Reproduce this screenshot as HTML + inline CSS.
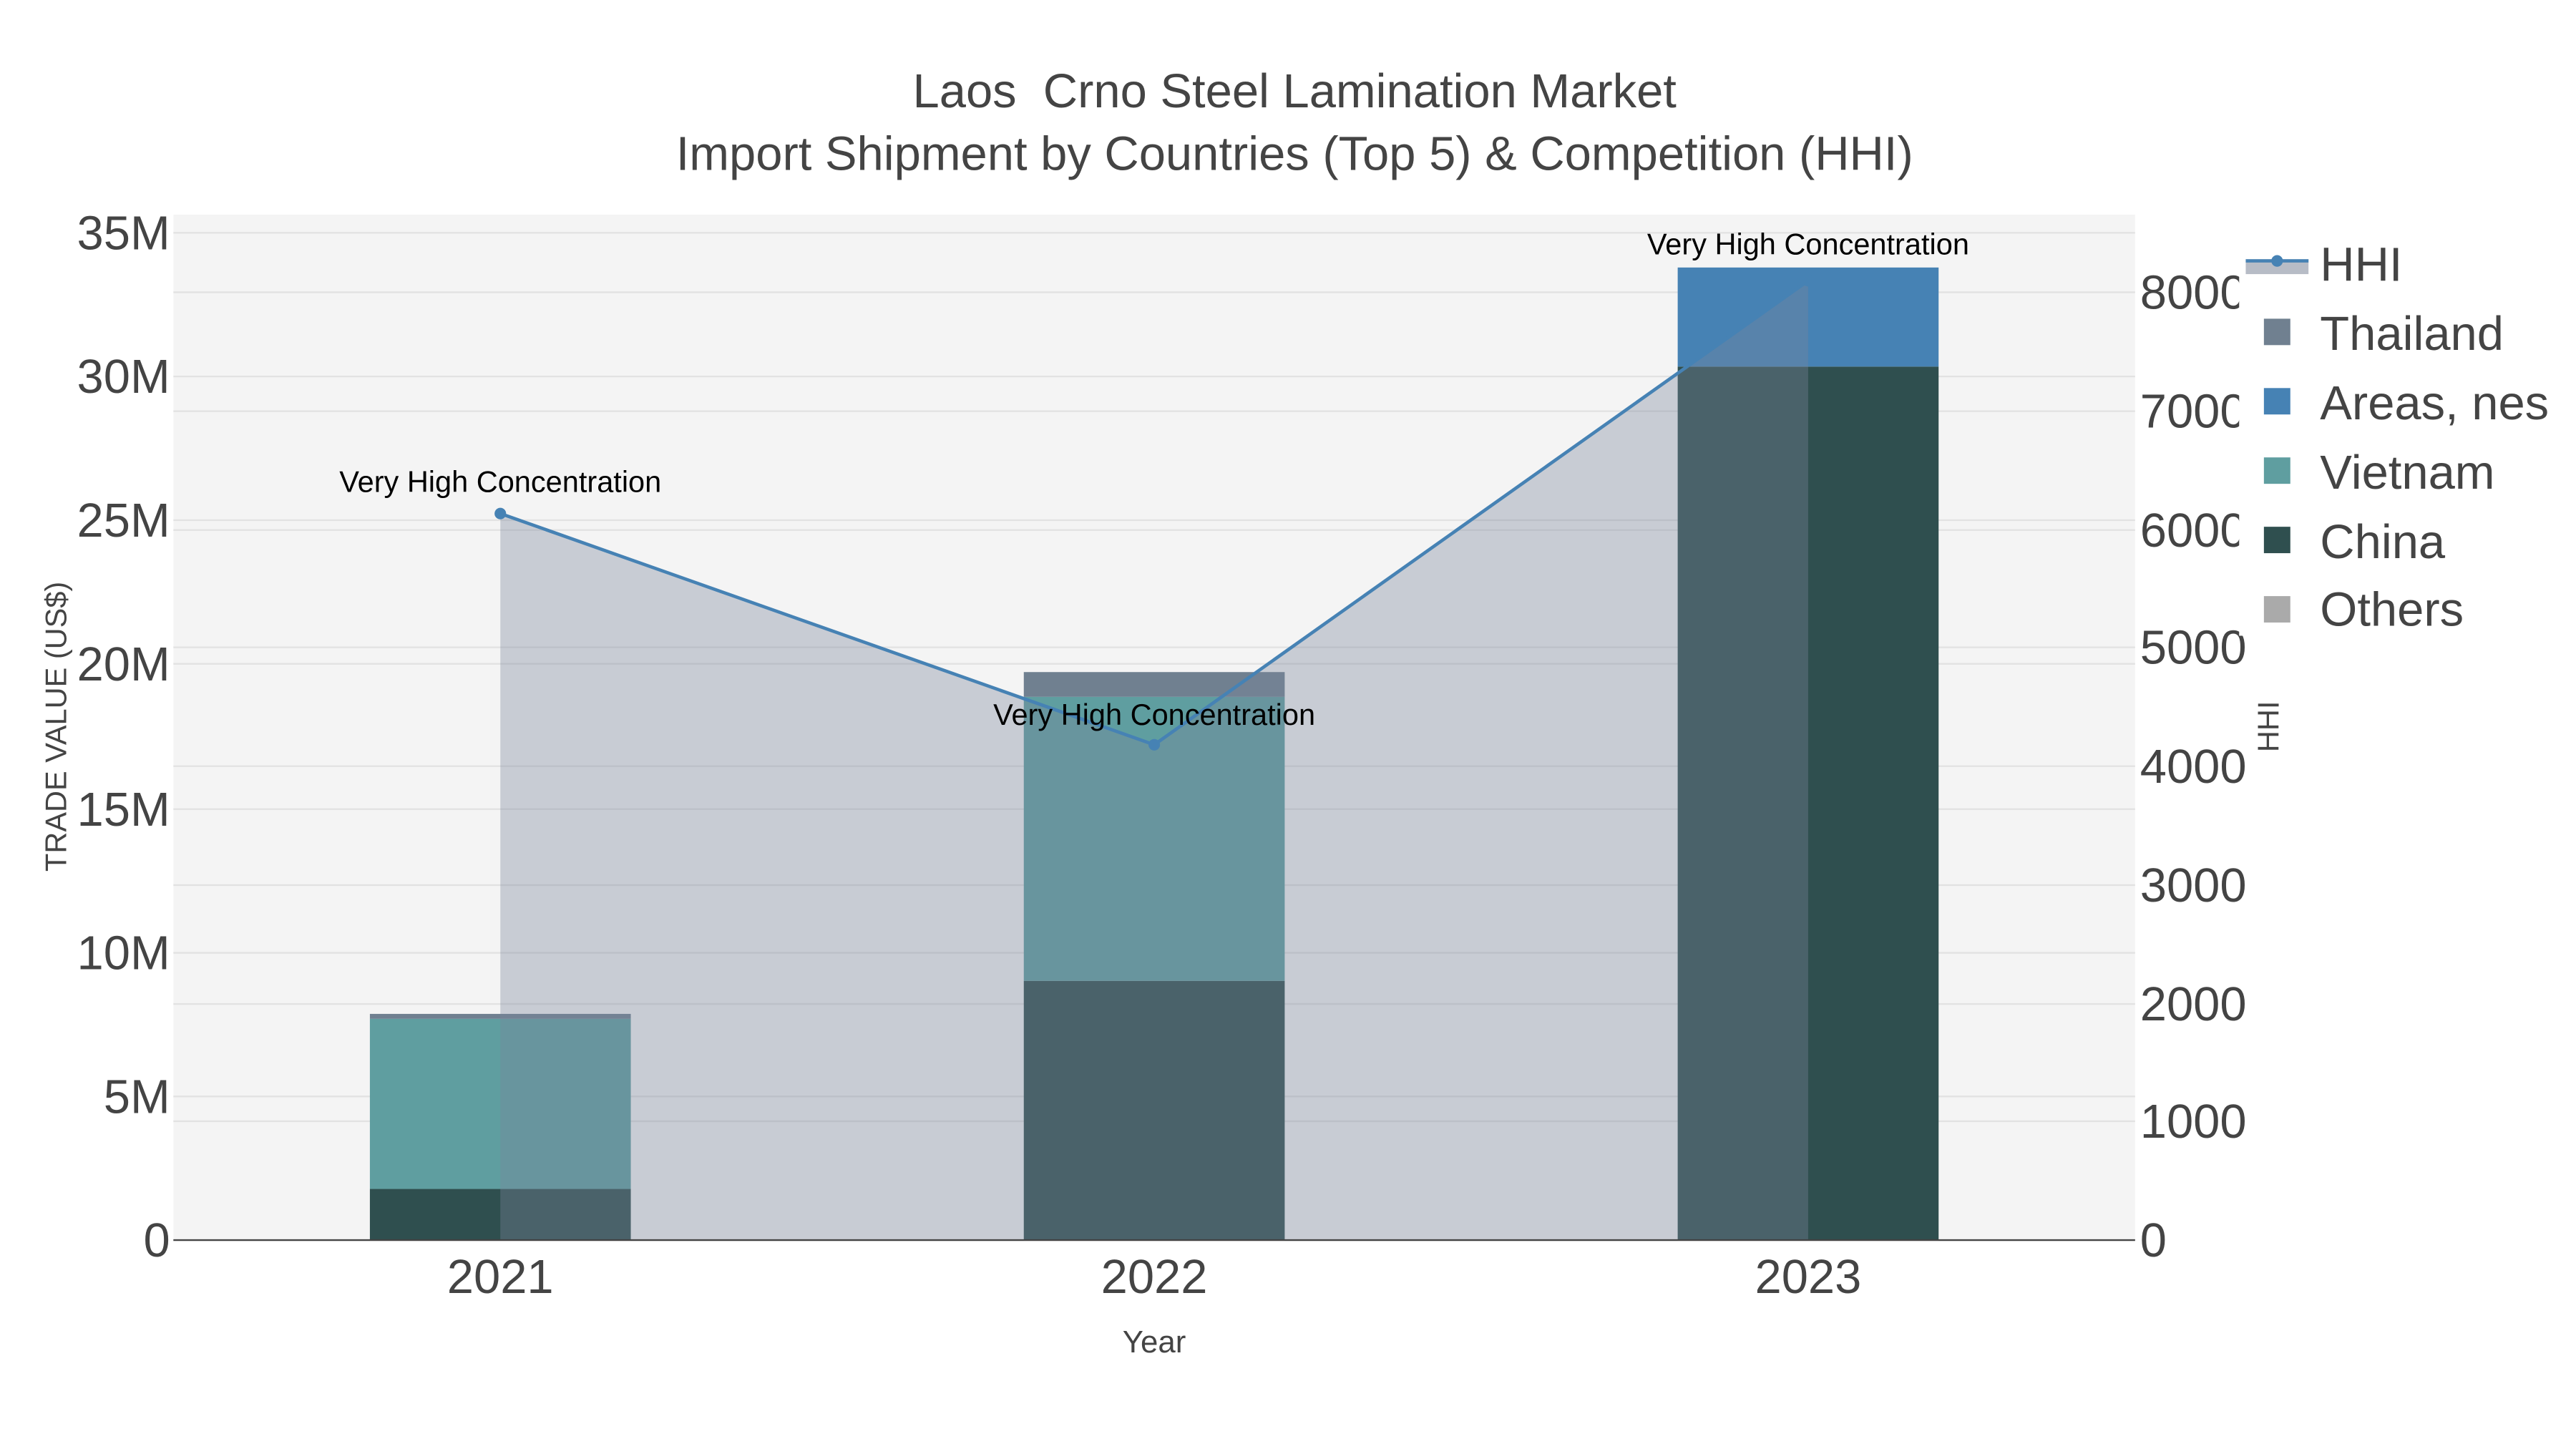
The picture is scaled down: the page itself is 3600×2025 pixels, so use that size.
<!DOCTYPE html>
<html><head><meta charset="utf-8"><style>
html,body{margin:0;padding:0;background:#fff;}
svg{display:block;font-family:"Liberation Sans",Arial,sans-serif;}
</style></head><body>
<svg width="3600" height="2025" viewBox="0 0 1560 877.5" xmlns="http://www.w3.org/2000/svg">
<rect width="1560" height="877.5" fill="#fff"/>
<rect x="105" y="130" width="1188" height="621" fill="#f4f4f4"/>
<g stroke="#e2e2e2" stroke-width="1">
<line x1="105" x2="1293" y1="664" y2="664"/><line x1="105" x2="1293" y1="577" y2="577"/>
<line x1="105" x2="1293" y1="490" y2="490"/><line x1="105" x2="1293" y1="402" y2="402"/>
<line x1="105" x2="1293" y1="315" y2="315"/><line x1="105" x2="1293" y1="228" y2="228"/>
<line x1="105" x2="1293" y1="141" y2="141"/>
<line x1="105" x2="1293" y1="679" y2="679"/><line x1="105" x2="1293" y1="608" y2="608"/>
<line x1="105" x2="1293" y1="536" y2="536"/><line x1="105" x2="1293" y1="464" y2="464"/>
<line x1="105" x2="1293" y1="392" y2="392"/><line x1="105" x2="1293" y1="321" y2="321"/>
<line x1="105" x2="1293" y1="249" y2="249"/><line x1="105" x2="1293" y1="177" y2="177"/>
</g>
<!-- bars -->
<rect x="224" y="720" width="158" height="31" fill="#2f4f4f"/>
<rect x="224" y="617" width="158" height="103" fill="#5f9ea0"/>
<rect x="224" y="614" width="158" height="3" fill="#708090"/>
<rect x="620" y="594" width="158" height="157" fill="#2f4f4f"/>
<rect x="620" y="422" width="158" height="172" fill="#5f9ea0"/>
<rect x="620" y="407" width="158" height="15" fill="#708090"/>
<rect x="1016" y="222" width="158" height="529" fill="#2f4f4f"/>
<rect x="1016" y="162" width="158" height="60" fill="#4682b4"/>
<!-- HHI area -->
<polygon points="303,751 303,311 699,451 1095,170 1095,751" fill="rgb(122,133,155)" fill-opacity="0.36"/>
<polyline points="303,311 699,451 1095,170" fill="none" stroke="#4682b4" stroke-width="2"/>
<circle cx="303" cy="311" r="3.5" fill="#4682b4"/><circle cx="699" cy="451" r="3.5" fill="#4682b4"/><circle cx="1095" cy="170" r="3.5" fill="#4682b4"/>
<line x1="105" x2="1293" y1="751" y2="751" stroke="#444" stroke-width="1"/>
<!-- annotations -->
<g font-size="18" fill="#000" text-anchor="middle">
<text x="303" y="298">Very High Concentration</text>
<text x="699" y="439">Very High Concentration</text>
<text x="1095" y="154">Very High Concentration</text>
</g>
<!-- left ticks -->
<g font-size="29" fill="#444" text-anchor="end">
<text x="103" y="761">0</text><text x="103" y="674">5M</text><text x="103" y="587">10M</text>
<text x="103" y="500">15M</text><text x="103" y="412">20M</text><text x="103" y="325">25M</text>
<text x="103" y="238">30M</text><text x="103" y="151">35M</text>
</g>
<!-- right ticks -->
<g font-size="29" fill="#444">
<text x="1296" y="761">0</text><text x="1296" y="689">1000</text><text x="1296" y="618">2000</text>
<text x="1296" y="546">3000</text><text x="1296" y="474">4000</text><text x="1296" y="402">5000</text>
<text x="1296" y="331">6000</text><text x="1296" y="259">7000</text><text x="1296" y="187">8000</text>
</g>
<rect x="1356" y="140" width="204" height="245" fill="#fff"/>
<!-- x ticks -->
<g font-size="29" fill="#444" text-anchor="middle">
<text x="303" y="783">2021</text><text x="699" y="783">2022</text><text x="1095" y="783">2023</text>
</g>
<text x="699" y="819" font-size="19" fill="#444" text-anchor="middle">Year</text>
<text transform="translate(40,440) rotate(-90)" font-size="18" fill="#444" text-anchor="middle">TRADE VALUE (US$)</text>
<text transform="translate(1380,440) rotate(-90)" font-size="18" fill="#444" text-anchor="middle">HHI</text>
<!-- title -->
<g font-size="29" fill="#444" text-anchor="middle">
<text x="784" y="65" xml:space="preserve">Laos  Crno Steel Lamination Market</text>
<text x="784" y="103">Import Shipment by Countries (Top 5) &amp; Competition (HHI)</text>
</g>
<!-- legend -->
<rect x="1360" y="157" width="38" height="9" fill="#b7bcc6"/>
<line x1="1360" x2="1398" y1="158" y2="158" stroke="#4682b4" stroke-width="2"/>
<circle cx="1379" cy="158" r="3.5" fill="#4682b4"/>
<rect x="1371" y="193" width="16" height="16" fill="#708090"/>
<rect x="1371" y="235" width="16" height="16" fill="#4682b4"/>
<rect x="1371" y="277" width="16" height="16" fill="#5f9ea0"/>
<rect x="1371" y="319" width="16" height="16" fill="#2f4f4f"/>
<rect x="1371" y="361" width="16" height="16" fill="#aaaaaa"/>
<g font-size="29" fill="#444">
<text x="1405" y="170">HHI</text><text x="1405" y="212">Thailand</text><text x="1405" y="254">Areas, nes</text>
<text x="1405" y="296">Vietnam</text><text x="1405" y="338">China</text><text x="1405" y="379">Others</text>
</g>
</svg>
</body></html>
